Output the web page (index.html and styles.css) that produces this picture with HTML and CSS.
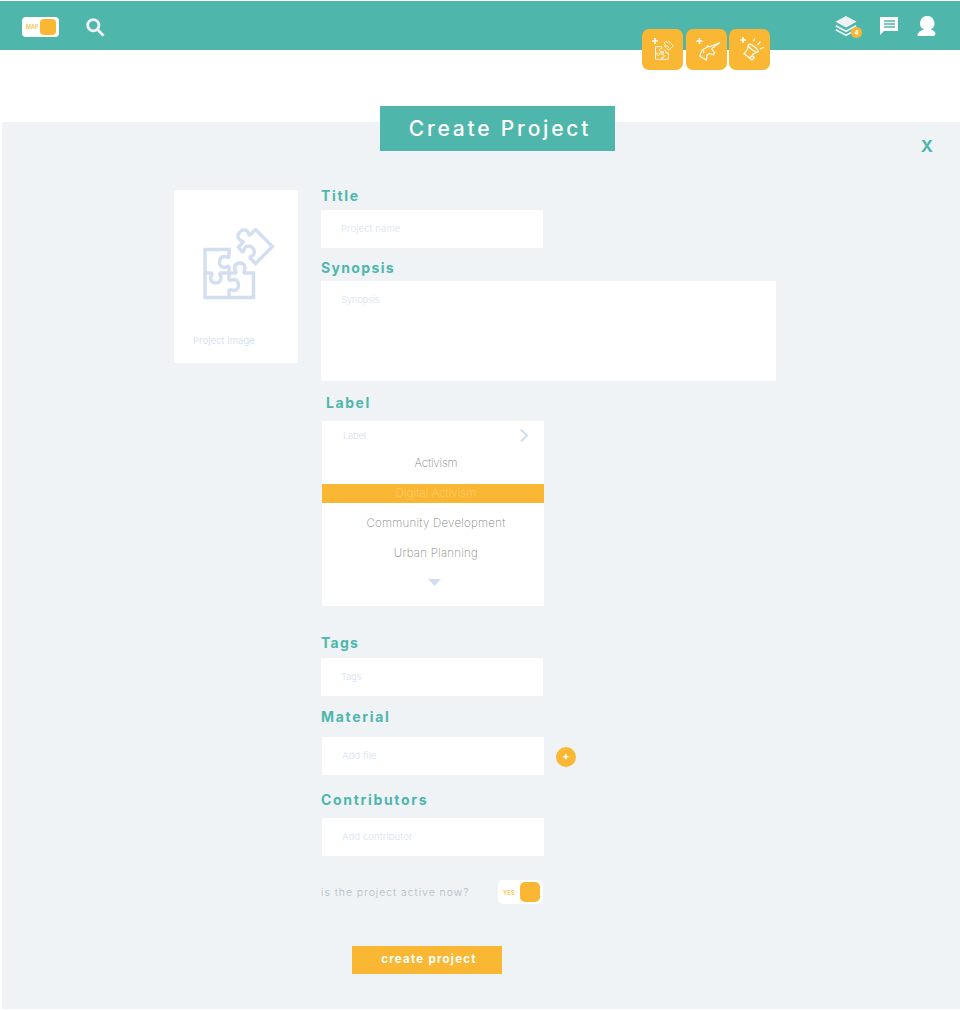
FILE: index.html
```html
<!DOCTYPE html>
<html lang="en">
<head>
<meta charset="utf-8">
<title>Create Project</title>
<link rel="stylesheet" href="styles.css">
</head>
<body>
<svg class="defs" aria-hidden="true">
  <symbol id="puzzle" viewBox="0 0 72 72">
    <g fill="none" stroke="currentColor" stroke-width="3.400">
      <path d="M2 21.500H26V28.500C25 31 23.500 28 21 28.500C15 29.500 15 39 21 39.500C23.500 39.500 25 37 26 39V45H17.500C15.500 46 18.500 48 18 50.500C17 56.500 8.500 56.500 7.500 50.500C7.500 48 10 46 8.500 45H2Z"/>
      <path d="M2 44V69.500H50.500V45H41.500C39.500 44 42.500 42 42 39.500C41 33.500 32.500 33.500 31.500 39.500C31.500 42 34 44 32.500 45H26V51.500C27 53.500 28.500 51.500 31 51.500C37 52.500 37 62 31 62.500C28.500 62.500 27 60.500 26 62.500V69.500"/>
      <path d="M52.500 1.500L69.500 18.500L52.500 35.500L47 30C46.500 28 50 28.500 51 26C53 21 47 16 42.500 19C40.500 20.500 41.500 24.500 39 23.500L35.500 19L40 14.500C40.500 12.500 37.500 13 36 11C32.500 6 39.500-.5 44 3C46.500 4.500 45 7.500 47 7Z"/>
    </g>
  </symbol>
</svg>
<header class="topbar">
  <div class="toggle toggle-map"><span class="toggle-text">MAP</span><span class="knob"></span></div>
  <svg class="search" viewBox="0 0 20 20"><circle cx="7.300" cy="7.300" r="5.600"/><path d="M11.300 11.300L17.500 17.800"/></svg>
  <nav class="actions">
    <div class="layers">
      <svg viewBox="0 0 22 21"><path class="solid" d="M11 0L21.500 5.700L11 11.500L.5 5.700Z"/><path class="line" d="M.8 9.800L11 15.300L21.200 9.800M.8 13.700L11 19.300L21.200 13.700"/></svg>
      <span class="badge">4</span>
    </div>
    <svg class="chat" viewBox="0 0 18 18"><path fill="#fff" d="M0 0H18V14H4L0 18Z"/><path stroke="#4fb6ac" stroke-width="1.600" d="M4 4H15M4 7H15M4 10H15"/></svg>
    <svg class="user" viewBox="0 0 19 20"><path fill="#fff" d="M10.300 0A7.200 7.200 0 0 1 13.500 13.600C16 14.200 18 15.500 18.500 17.500Q18.300 20 16 20H1Q0 20 .5 18.700C1.500 16 4 14.200 7 13.600A7.200 7.200 0 0 1 10.300 0Z"/></svg>
  </nav>
  <div class="tiles">
    <div class="tile"><svg viewBox="0 0 41 41"><path class="plus" d="M10 12H16M13 9V15"/><use class="mini" href="#puzzle" x="13" y="12" width="19" height="19"/></svg></div>
    <div class="tile"><svg viewBox="0 0 41 41"><path class="plus" d="M10.500 12H16.500M13.500 9V15"/><path class="art" d="M23 18L33.500 13.700L25.500 19.800M23 18L21.500 16.700L21 18.500C16.500 19.500 14.500 23 14 27.500L20.500 31L20.800 26.500L23 24.500L27.300 25.800L28.800 23.800L25.500 19.800M17.500 21.500L18 24"/></svg></div>
    <div class="tile"><svg viewBox="0 0 41 41"><path class="plus" d="M11 11H17M14 8V14"/><ellipse class="art" cx="24.300" cy="19.300" rx="6" ry="1.900" transform="rotate(38 24.300 19.300)"/><path class="art" d="M19.500 15.800L18.500 20L15 24.800L20.800 29L25 24.500L29 23M19.500 28.300L23 31L25.300 28.500L23 26.500M24.500 12L26 9.300M28.500 15.700L31.500 12.800M31 20L35 18.200"/></svg></div>
  </div>
</header>
<main class="panel">
  <h1 class="banner"><span>Create Project</span></h1>
  <div class="close">X</div>
  <div class="content">
    <div class="image-card">
      <svg class="puzzle"><use href="#puzzle"/></svg>
      <span class="hint">Project image</span>
    </div>
    <form class="form">
      <label class="label">Title</label>
      <div class="field"><span class="hint">Project name</span></div>
      <label class="label label-synopsis">Synopsis</label>
      <div class="field area"><span class="hint tight">Synopsis</span></div>
      <label class="label label-label">Label</label>
      <div class="select">
        <div class="select-head"><span class="hint tight">Label</span><svg class="chevron" viewBox="0 0 9 13"><path d="M1 .8L7 6.500L1 12.200"/></svg></div>
        <div class="option short">Activism</div>
        <div class="option selected">Digital Activism</div>
        <div class="option long">Community Development</div>
        <div class="option long">Urban Planning</div>
        <div class="more"></div>
      </div>
      <label class="label label-tags">Tags</label>
      <div class="field"><span class="hint tight">Tags</span></div>
      <label class="label label-material">Material</label>
      <div class="row"><div class="field shifted"><span class="hint">Add file</span></div><span class="add">+</span></div>
      <label class="label label-contrib">Contributors</label>
      <div class="field shifted"><span class="hint">Add contributor</span></div>
      <div class="row active-row"><span class="question">is the project active now?</span><div class="toggle toggle-yes"><span class="toggle-text">YES</span><span class="knob"></span></div></div>
      <div class="submit">create project</div>
    </form>
  </div>
</main>
</body>
</html>
```
FILE: styles.css
```css
* { box-sizing: border-box; }
body { margin: 0; background: #fff; font-family: Inter, "Open Sans", sans-serif; }
.defs { display: none; }

/* Top bar */
.topbar { position: relative; display: flex; align-items: flex-start; height: 49px; margin-top: 1px; padding: 15px 24px 0 22px; background: #4fb6ac; }
.toggle { display: flex; align-items: center; justify-content: space-between; background: #fff; border-radius: 4px; color: #fab733; }
.knob { background: #fab733; }
.toggle-map { width: 37px; height: 20px; margin-top: 1px; padding: 0 3px 0 4px; }
.toggle-map .knob { width: 16px; height: 16px; border-radius: 4px; }
.toggle-map .toggle-text { font-size: 5.500px; font-weight: 500; }
.search { width: 20px; height: 20px; margin: 2px 0 0 27px; fill: none; stroke: #eff3f6; stroke-width: 2.800; }
.actions { display: flex; margin-left: auto; }
.layers { position: relative; width: 22px; height: 21px; margin-right: 23px; }
.layers svg { display: block; width: 22px; height: 21px; }
.solid { fill: #eff3f6; }
.line { fill: none; stroke: #eff3f6; stroke-width: 1.800; }
.badge { position: absolute; left: 16px; top: 11px; width: 11px; height: 11px; border-radius: 50%; background: #fab733; color: #fff; font-size: 6px; font-weight: 700; line-height: 11px; text-align: center; }
.chat { width: 18px; height: 18px; margin: 1px 19px 0 0; }
.user { width: 19px; height: 20px; }
.tiles { position: absolute; left: 642px; top: 28px; display: flex; gap: 2.500px; }
.tile { width: 41px; height: 41px; border-radius: 7px; background: #fab733; color: #fff; }
.tile svg { display: block; width: 41px; height: 41px; }
.plus { stroke: #fff; stroke-width: 1.500; }
.art { fill: none; stroke: #fff; stroke-width: 1.200; stroke-linejoin: round; }
.mini { stroke: #fff; }

/* Form panel */
.panel { display: flow-root; height: 887px; margin: 72px 0 0 2px; background: #eff3f6; }
.banner { display: flex; align-items: center; justify-content: center; width: 235px; height: 45px; margin: -16px 0 0 378px; padding-left: 5px; background: #4fb6ac; color: #fff; font-size: 21px; font-weight: 500; letter-spacing: 2.800px; }
.close { height: 18px; margin: -14px 27px 0 0; color: #4fb6ac; font-size: 16.500px; line-height: 18px; font-weight: 700; text-align: right; }
.content { display: flex; gap: 23px; margin: 35px 0 0 172px; }
.image-card { width: 124px; height: 173px; padding: 38px 0 0 19px; background: #fff; }
.puzzle { display: block; width: 72px; height: 72px; margin: 0 0 35px 10px; color: #d3dff1; }
.hint { display: block; width: max-content; color: #d6e1f2; font-size: 9.500px; line-height: 12px; font-weight: 300; letter-spacing: .12px; white-space: nowrap; }
.tight { letter-spacing: -.25px; }
.image-card .hint { color: #cddaee; }
.form { display: flex; flex-direction: column; align-items: flex-start; margin-top: -3px; }
.label { color: #4fb6ac; font-size: 14px; line-height: 18px; font-weight: 700; letter-spacing: 1.680px; }
.label-synopsis { margin-top: 11px; letter-spacing: 1.350px; }
.field { width: 222px; height: 38px; margin-top: 5px; padding: 13px 0 0 20px; background: #fff; }
.area { width: 455px; height: 100px; margin-top: 4px; }
.label-label { margin: 13px 0 0 5px; letter-spacing: 1.550px; }

/* Label picker */
.select { width: 222px; height: 185px; margin: 9px 0 0 1px; background: #fff; }
.select-head { display: flex; align-items: center; justify-content: space-between; height: 29px; padding: 0 15px 0 21px; }
.chevron { width: 9px; height: 13px; fill: none; stroke: #d3dff1; stroke-width: 2.200; }
.option { display: flex; align-items: center; justify-content: center; height: 19px; margin-bottom: 11px; padding: 0 0 1px 6px; color: #858585; font-size: 11.500px; font-weight: 200; letter-spacing: .07px; }
.short { letter-spacing: -.16px; }
.long { letter-spacing: .24px; }
.select-head + .option { margin-top: 4px; }
.option.selected { margin-top: 0; background: #fab733; color: #fbd07c; }
.select-head + .option + .selected { margin-top: 0; }
.more { width: 13px; height: 7px; margin: 15px 0 0 106px; background: #d3dff1; clip-path: polygon(0 0, 100% 0, 50% 100%); }
.option + .more { margin-top: 16px; }

.label-tags { margin-top: 28px; letter-spacing: 1.250px; }
.label-tags + .field { margin-top: 6px; }
.label-material { margin-top: 12px; }
.row { display: flex; align-items: center; }
.shifted { margin-left: 1px; }
.row .field { margin-top: 11px; }
.add { width: 20px; height: 20px; margin: 13px 0 0 12px; border-radius: 50%; background: #fab733; color: #fff; font-size: 10px; line-height: 19px; font-weight: 800; text-align: center; }
.label-contrib { margin-top: 16px; }
.label-contrib + .field { margin-top: 9px; }
.active-row { width: 222px; height: 24px; margin-top: 24px; justify-content: space-between; }
.question { color: #b0babf; font-size: 10.500px; font-weight: 300; letter-spacing: .950px; white-space: nowrap; }
.toggle-yes { width: 45px; height: 24px; border-radius: 5px; padding: 0 3px 0 5px; }
.toggle-yes .knob { width: 20px; height: 20px; border-radius: 5px; }
.toggle-yes .toggle-text { font-size: 6px; font-weight: 500; }
.submit { display: flex; align-items: center; justify-content: center; width: 150px; height: 28px; margin: 42px 0 0 31px; padding: 0 0 3px 4px; background: #fab733; color: #fff; font-size: 11.500px; font-weight: 700; letter-spacing: 1.250px; }
```
